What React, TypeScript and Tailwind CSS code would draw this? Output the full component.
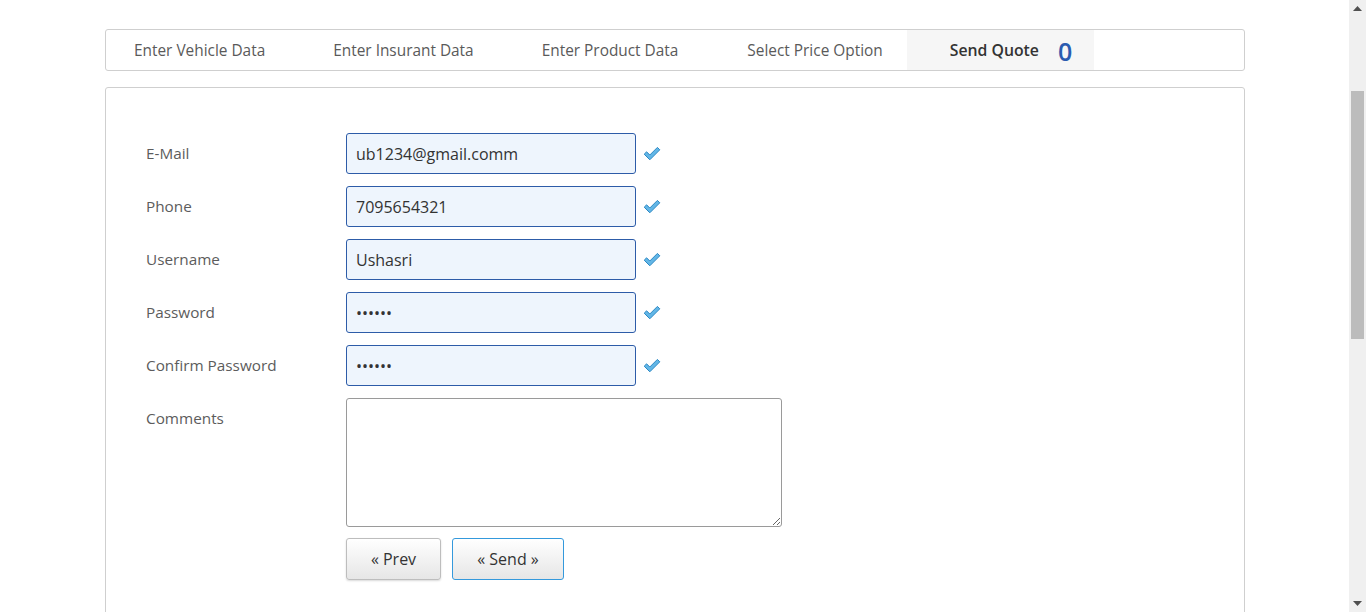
const tabs = [
  { label: "Enter Vehicle Data", pad: "pl-[28px] pr-[24px]" },
  { label: "Enter Insurant Data", pad: "pl-[44px] pr-[24px]" },
  { label: "Enter Product Data", pad: "pl-[44px] pr-[25px]" },
  { label: "Select Price Option", pad: "pl-[44px] pr-[24px]" },
];

const fields = [
  { label: "E-Mail", type: "text", value: "ub1234@gmail.comm" },
  { label: "Phone", type: "text", value: "7095654321" },
  { label: "Username", type: "text", value: "Ushasri" },
  { label: "Password", type: "password", value: "ushasr" },
  { label: "Confirm Password", type: "password", value: "ushasr" },
];

const Check = () => (
  <svg width="18" height="15" viewBox="0 0 18 15" className="ml-[7px]">
    <path
      d="M1.2 8.2 L3.6 5.8 L6.8 9 L14.4 1.4 L16.8 3.8 L6.8 13.8 Z"
      fill="#62b6e6"
      stroke="#2b88c4"
      strokeWidth="1"
      strokeLinejoin="round"
    />
  </svg>
);

// window scrollbar, page is scrolled down to the form
const Scrollbar = () => (
  <div className="flex w-[17px] shrink-0 flex-col bg-[#f0f0f0]">
    <div className="flex h-[17px] items-center justify-center">
      <svg width="9" height="5" viewBox="0 0 9 5">
        <path d="M0 5 L4.5 0 L9 5 Z" fill="#505050" />
      </svg>
    </div>
    <div className="flex-1 px-[2px]">
      <div className="mt-[74px] h-[248px] bg-[#bcbcbc]" />
    </div>
    <div className="flex h-[17px] items-center justify-center">
      <svg width="9" height="5" viewBox="0 0 9 5">
        <path d="M0 0 L9 0 L4.5 5 Z" fill="#505050" />
      </svg>
    </div>
  </div>
);

const App = () => {
  return (
    <div className="flex h-screen overflow-hidden bg-white font-['Open_Sans',sans-serif]">
      <div className="min-w-0 flex-1">
        <div className="ml-[105px] w-[1140px] pt-[29px]">
          {/* wizard steps */}
          <nav className="flex h-[42px] items-stretch rounded-[3px] border border-[#cfcfcf] text-[15.4px] text-[#5a5a5a]">
            {tabs.map((t) => (
              <div key={t.label} className={`flex items-center pt-[2px] ${t.pad}`}>
                {t.label}
              </div>
            ))}
            <div className="flex items-center bg-[#f6f6f6] pl-[43px] pr-[22px] pt-[2px]">
              <span className="text-[15.8px] font-semibold text-[#333]">Send Quote</span>
              <span className="ml-[19px] text-[25px] font-semibold leading-none text-[#2a5cb0]">0</span>
            </div>
          </nav>

          <div className="mt-[16px] h-[600px] rounded-[3px] border border-[#cfcfcf] pl-[40px] pt-[45px]">
            <div className="flex flex-col gap-[12px]">
              {fields.map((f) => (
                <div key={f.label} className="flex items-center">
                  <label className="w-[200px] text-[15.3px] text-[#5c5c5c]">{f.label}</label>
                  <input
                    type={f.type}
                    defaultValue={f.value}
                    className="h-[41px] w-[290px] rounded-[3px] border border-[#2d5ca8] bg-[#eef5fd] px-[9px] text-[16px] text-[#333] outline-none"
                  />
                  <Check />
                </div>
              ))}
              <div className="flex items-start">
                <label className="w-[200px] pt-[9px] text-[15.3px] text-[#5c5c5c]">Comments</label>
                <textarea className="h-[129px] w-[436px] rounded-[3px] border border-[#9a9a9a] bg-white outline-none" />
              </div>
            </div>

            <div className="ml-[200px] mt-[11px] flex gap-[11px]">
              <button className="h-[42px] w-[95px] rounded-[3px] border border-[#bdbdbd] bg-gradient-to-b from-white to-[#e6e6e6] text-[16px] text-[#333] shadow-[0_1px_2px_rgba(0,0,0,0.15)]">
                « Prev
              </button>
              <button className="h-[42px] w-[112px] rounded-[3px] border border-[#3499dc] bg-gradient-to-b from-white to-[#e6e6e6] text-[16px] text-[#333]">
                « Send »
              </button>
            </div>
          </div>
        </div>
      </div>
      <Scrollbar />
    </div>
  );
};

export default App;
